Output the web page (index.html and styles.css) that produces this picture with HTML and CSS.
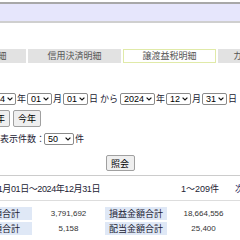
FILE: index.html
```html
<!DOCTYPE html>
<html lang="ja">
<head>
    <meta charset="UTF-8">
    <title>譲渡益税明細</title>
    <link rel="stylesheet" href="styles.css">
</head>
<body>
<div class="page">
    <div class="topbar"></div>

    <!-- Tabs -->
    <ul class="tabs">
        <li>国内株式明細</li>
        <li>信用決済明細</li>
        <li class="active">譲渡益税明細</li>
        <li>カード積立明細</li>
    </ul>

    <!-- Search form -->
    <form class="search">
        <div class="dates">
            <span class="select sel-year"><select><option>2024</option></select><svg class="chev" viewBox="0 0 6 4"><path d="M0.6 0.6 L3 3 L5.4 0.6"/></svg></span><span class="unit">年</span>
            <span class="select sel-small"><select><option>01</option></select><svg class="chev" viewBox="0 0 6 4"><path d="M0.6 0.6 L3 3 L5.4 0.6"/></svg></span><span class="unit">月</span>
            <span class="select sel-small"><select><option>01</option></select><svg class="chev" viewBox="0 0 6 4"><path d="M0.6 0.6 L3 3 L5.4 0.6"/></svg></span><span class="unit">日</span>
            <span class="from">から</span>
            <span class="select sel-year"><select><option>2024</option></select><svg class="chev" viewBox="0 0 6 4"><path d="M0.6 0.6 L3 3 L5.4 0.6"/></svg></span><span class="unit">年</span>
            <span class="select sel-small"><select><option>12</option></select><svg class="chev" viewBox="0 0 6 4"><path d="M0.6 0.6 L3 3 L5.4 0.6"/></svg></span><span class="unit">月</span>
            <span class="select sel-small"><select><option>31</option></select><svg class="chev" viewBox="0 0 6 4"><path d="M0.6 0.6 L3 3 L5.4 0.6"/></svg></span><span class="unit">日</span>
        </div>
        <div class="quick">
            <button type="button">前年</button>
            <button type="button">今年</button>
        </div>
        <div class="count">
            <span class="count-label">表示件数：</span>
            <span class="select sel-count"><select><option>50</option></select><svg class="chev" viewBox="0 0 6 4"><path d="M0.6 0.6 L3 3 L5.4 0.6"/></svg></span><span class="unit">件</span>
        </div>
        <div class="submit">
            <button type="submit">照会</button>
        </div>
    </form>

    <div class="result-head">
        <span class="period">2024年01月01日～2024年12月31日</span>
        <span class="hits">1～209件</span>
        <a class="next">次へ</a>
    </div>

    <table class="summary">
        <tr>
            <th class="first">売買金額合計</th><td>3,791,692</td>
            <th>損益金額合計</th><td>18,664,556</td>
            <th>課</th>
        </tr>
        <tr>
            <th class="first">税金額合計</th><td>5,158</td>
            <th>配当金額合計</th><td>25,400</td>
            <th>還</th>
        </tr>
    </table>
</div>
</body>
</html>
```

FILE: styles.css
```css
body {
    margin: 0;
    font-family: "Liberation Sans", "Noto Sans CJK JP", sans-serif;
    font-size: 9px;
    color: #223;
    background: #fff;
    overflow: hidden;
}
.page {
    margin-left: -90px;
    width: 420px;
}
.topbar {
    margin-top: 2px;
    height: 17px;
    background: #e6e6fc;
    border-top: 2px solid #a8a8a8;
    border-bottom: 2px solid #cfcfcf;
}
.tabs {
    list-style: none;
    margin: 26px 0 0;
    padding: 0 0 0 23px;
    display: flex;
    gap: 2px;
}
.tabs li {
    width: 93px;
    height: 14px;
    box-sizing: border-box;
    background: #e2e2e2;
    color: #555;
    text-align: center;
    line-height: 14px;
}
.tabs li.active {
    background: #fff;
    border: 1px solid #e0eaa8;
    line-height: 12px;
}
.search {
    margin: 0;
}
.dates {
    display: flex;
    align-items: center;
    margin-top: 29px;
    padding-left: 71px;
}
.select {
    position: relative;
    display: inline-flex;
    height: 12px;
}
.select select {
    appearance: none;
    -webkit-appearance: none;
    font: inherit;
    color: #000;
    width: 100%;
    height: 12px;
    line-height: 10px;
    padding: 0 0 0 3px;
    border: 1px solid #8a8a8a;
    border-radius: 2px;
    background: #fff;
    box-sizing: border-box;
}
.chev {
    position: absolute;
    right: 3px;
    top: 4px;
    width: 6px;
    height: 4px;
    pointer-events: none;
}
.chev path {
    fill: none;
    stroke: #111;
    stroke-width: 1.2;
}
.sel-year {
    width: 35px;
}
.sel-small {
    width: 25px;
}
.sel-count {
    width: 30px;
}
.unit {
    width: 9px;
    margin: 0 1px;
}
.from {
    margin: 0 2px 0 1px;
}
button {
    font: inherit;
    color: #000;
    background: #efefef;
    border: 1px solid #a0a0a0;
    border-radius: 2px;
    padding: 0;
}
.quick {
    display: flex;
    gap: 3px;
    margin-top: 5px;
    padding-left: 72px;
}
.quick button {
    width: 28px;
    height: 17px;
}
.count {
    display: flex;
    align-items: center;
    margin-top: 5px;
    padding-left: 90px;
}
.count-label {
    margin-right: -1px;
}
.submit {
    margin-top: 10px;
    text-align: center;
    height: 16px;
}
.submit button {
    width: 29px;
    height: 16px;
    vertical-align: top;
}
.result-head {
    margin-top: 4px;
    border-top: 1px solid #cccccc;
    border-bottom: 1px solid #dddddd;
    height: 24px;
    display: flex;
    align-items: center;
}
.period {
    width: 190px;
    text-align: right;
    letter-spacing: -0.4px;
}
.hits {
    margin-left: auto;
    margin-right: 16px;
}
.next {
    color: #225;
    width: 95px;
}
.summary {
    margin-top: 4px;
    margin-left: 48px;
    border-collapse: separate;
    border-spacing: 2px;
}
.summary th {
    font-weight: normal;
    background: #dfe8f6;
    color: #223;
    width: 62px;
    height: 12px;
    padding: 0;
    text-align: center;
}
.summary th.first {
    width: 72px;
    text-align: right;
    padding-right: 12px;
    box-sizing: border-box;
}
.summary td {
    width: 69px;
    height: 12px;
    text-align: center;
    color: #333;
    font-size: 8px;
    padding: 0;
}
```
